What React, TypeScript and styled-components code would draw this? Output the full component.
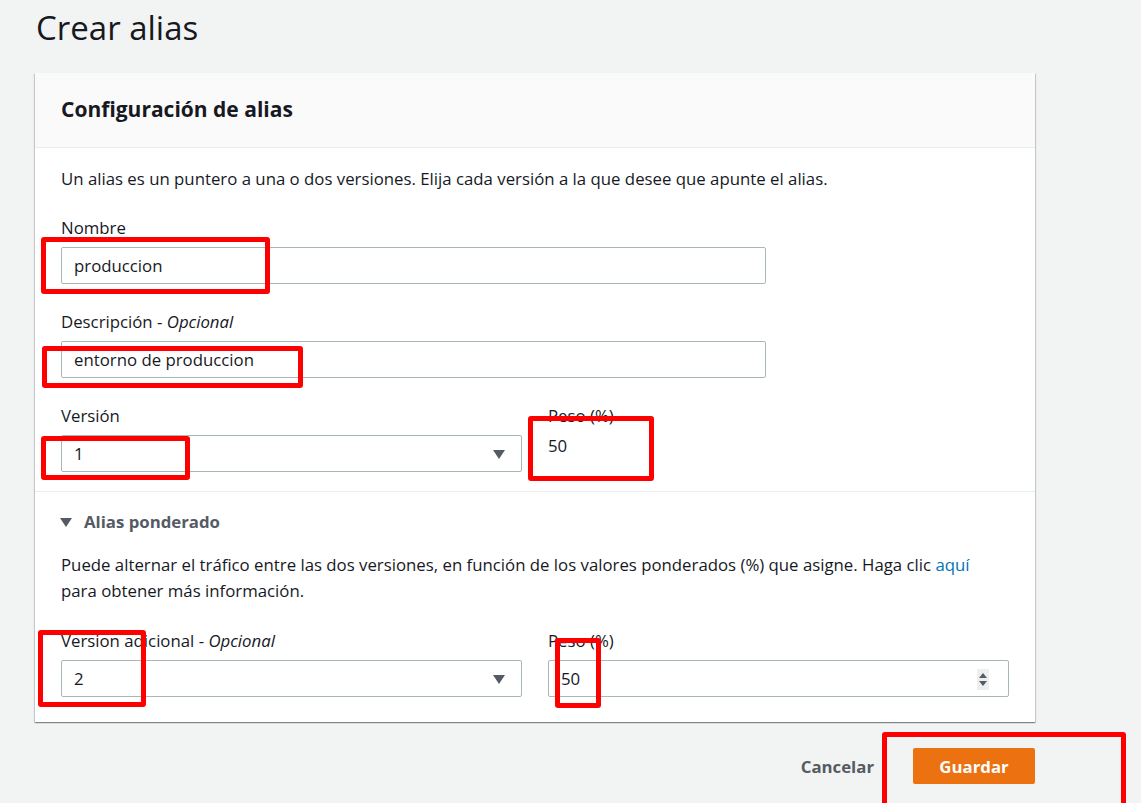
import React from "react";
import styled, { createGlobalStyle } from "styled-components";

const Global = createGlobalStyle`
  html, body { margin: 0; padding: 0; background: #f2f3f3; }
  body { font-family: "Open Sans", "Noto Sans", Arial, sans-serif; color: #16191f; }
  * { box-sizing: border-box; }
`;

const FS = "16.8px";

const Page = styled.div`
  position: relative;
  width: 1141px;
  height: 803px;
  overflow: hidden;
  padding: 8px 0 0 35px;
`;

const Title = styled.h1`
  margin: 0 0 25px 1px;
  font-size: 33px;
  line-height: 40px;
  font-weight: 400;
  color: #16191f;
`;

const Card = styled.section`
  width: 1000px;
  background: #fff;
  box-shadow: 0 1px 1px 0 rgba(0, 28, 36, 0.3), 1px 1px 1px 0 rgba(0, 28, 36, 0.15),
    -1px 1px 1px 0 rgba(0, 28, 36, 0.15);
`;

const CardHeader = styled.header`
  height: 75px;
  display: flex;
  align-items: center;
  padding: 0 26px 2px;
  background: #fafafa;
  border-bottom: 1px solid #eaeded;
`;

const CardTitle = styled.h2`
  margin: 0;
  font-size: 21px;
  font-weight: 700;
  color: #16191f;
`;

const Section = styled.div<{ $divider?: boolean; $pt: number; $pb: number }>`
  display: flex;
  flex-direction: column;
  padding: ${(p) => p.$pt}px 26px ${(p) => p.$pb}px;
  border-bottom: ${(p) => (p.$divider ? "1px solid #eaeded" : "none")};
`;

const Text = styled.p<{ $lh?: number; $mt?: number }>`
  margin: ${(p) => p.$mt ?? 0}px 0 0;
  font-size: ${FS};
  line-height: ${(p) => p.$lh ?? 22}px;
  color: #16191f;
`;

const Link = styled.a`
  color: #0073bb;
  text-decoration: none;
`;

const Field = styled.div<{ $mt?: number }>`
  display: flex;
  flex-direction: column;
  margin-top: ${(p) => p.$mt ?? 27}px;
`;

const Label = styled.label`
  font-size: ${FS};
  line-height: 22px;
  margin-bottom: 8px;
  color: #16191f;
  em { font-style: italic; }
`;

const Input = styled.div<{ $w?: number }>`
  position: relative;
  width: ${(p) => (p.$w ? `${p.$w}px` : "100%")};
  height: 37px;
  border: 1px solid #aab7b8;
  border-radius: 2px;
  background: #fff;
  padding: 0 12px;
  display: flex;
  align-items: center;
  font-size: ${FS};
  color: #16191f;
`;

const Caret = styled.span`
  position: absolute;
  right: 16px;
  top: 50%;
  margin-top: -4px;
  width: 0;
  height: 0;
  border-left: 6px solid transparent;
  border-right: 6px solid transparent;
  border-top: 9px solid #545b64;
`;

const Spinner = styled.span`
  position: absolute;
  right: 19px;
  top: 8px;
  width: 12px;
  height: 21px;
  background: #eeeeee;
  display: flex;
  flex-direction: column;
  align-items: center;
  justify-content: center;
  gap: 3px;
`;

const SpinArrow = styled.span<{ $up?: boolean }>`
  width: 0;
  height: 0;
  border-left: 4px solid transparent;
  border-right: 4px solid transparent;
  ${(p) => (p.$up ? "border-bottom: 5px solid #545b64;" : "border-top: 5px solid #545b64;")}
`;

const Grid = styled.div<{ $mt?: number }>`
  display: grid;
  grid-template-columns: 461px 461px;
  column-gap: 26px;
  margin-top: ${(p) => p.$mt ?? 0}px;
`;

const PlainValue = styled.div`
  font-size: ${FS};
  line-height: 22px;
  color: #16191f;
`;

const Expander = styled.div`
  display: flex;
  align-items: center;
  gap: 12px;
  font-size: ${FS};
  line-height: 22px;
  font-weight: 700;
  color: #545b64;
`;

const ExpandCaret = styled.span`
  width: 0;
  height: 0;
  margin-left: -1px;
  border-left: 6px solid transparent;
  border-right: 6px solid transparent;
  border-top: 9px solid #545b64;
`;

const Actions = styled.div`
  width: 1000px;
  display: flex;
  justify-content: flex-end;
  align-items: center;
  gap: 19px;
  margin-top: 26px;
`;

const TextButton = styled.button`
  border: none;
  background: transparent;
  padding: 0 20px;
  height: 36px;
  font-family: inherit;
  font-size: ${FS};
  font-weight: 700;
  color: #545b64;
`;

const PrimaryButton = styled.button`
  border: none;
  border-radius: 2px;
  background: #ec7211;
  width: 122px;
  height: 36px;
  font-family: inherit;
  font-size: ${FS};
  font-weight: 700;
  color: #fff;
`;

const Mark = styled.div`
  position: absolute;
  border: 5px solid #ff0000;
  border-radius: 3px;
  pointer-events: none;
`;

const marks = [
  { left: 41, top: 237, width: 229, height: 57 },
  { left: 42, top: 346, width: 261, height: 42 },
  { left: 41, top: 436, width: 149, height: 44 },
  { left: 528, top: 416, width: 126, height: 65 },
  { left: 38, top: 630, width: 108, height: 77 },
  { left: 555, top: 638, width: 46, height: 70 },
  { left: 882, top: 732, width: 244, height: 90 },
];

export default function App() {
  return (
    <>
      <Global />
      <Page>
        <Title>Crear alias</Title>
        <Card>
          <CardHeader>
            <CardTitle>Configuración de alias</CardTitle>
          </CardHeader>
          <Section $divider $pt={20} $pb={19}>
            <Text>
              Un alias es un puntero a una o dos versiones. Elija cada versión a la que desee que
              apunte el alias.
            </Text>
            <Field>
              <Label>Nombre</Label>
              <Input $w={705}>produccion</Input>
            </Field>
            <Field>
              <Label>
                Descripción - <em>Opcional</em>
              </Label>
              <Input $w={705}>entorno de produccion</Input>
            </Field>
            <Grid $mt={27}>
              <Field $mt={0}>
                <Label>Versión</Label>
                <Input>
                  1
                  <Caret />
                </Input>
              </Field>
              <Field $mt={0}>
                <Label>Peso (%)</Label>
                <PlainValue>50</PlainValue>
              </Field>
            </Grid>
          </Section>
          <Section $pt={19} $pb={25}>
            <Expander>
              <ExpandCaret />
              Alias ponderado
            </Expander>
            <Text $lh={26} $mt={19}>
              Puede alternar el tráfico entre las dos versiones, en función de los valores
              ponderados (%) que asigne. Haga clic <Link href="#">aquí</Link>
              <br />
              para obtener más información.
            </Text>
            <Grid $mt={26}>
              <Field $mt={0}>
                <Label>
                  Version adicional - <em>Opcional</em>
                </Label>
                <Input>
                  2
                  <Caret />
                </Input>
              </Field>
              <Field $mt={0}>
                <Label>Peso (%)</Label>
                <Input>
                  50
                  <Spinner>
                    <SpinArrow $up />
                    <SpinArrow />
                  </Spinner>
                </Input>
              </Field>
            </Grid>
          </Section>
        </Card>
        <Actions>
          <TextButton>Cancelar</TextButton>
          <PrimaryButton>Guardar</PrimaryButton>
        </Actions>
        {marks.map((m, i) => (
          <Mark key={i} style={{ left: m.left, top: m.top, width: m.width, height: m.height }} />
        ))}
      </Page>
    </>
  );
}
